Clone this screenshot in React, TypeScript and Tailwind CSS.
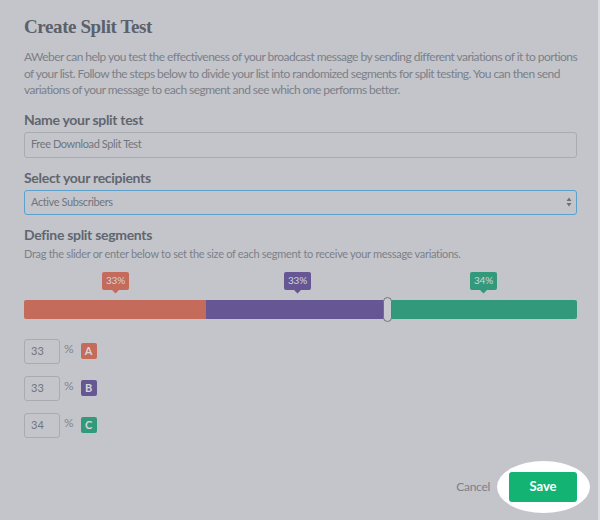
import React from "react";

const sans = { fontFamily: "Lato, 'Open Sans', sans-serif" } as React.CSSProperties;

function Tip({ label, color, left }: { label: string; color: string; left: number }) {
  return (
    <div className="absolute top-0 flex flex-col items-center" style={{ left }}>
      <div className={`rounded-[2px] px-[4px] h-[18px] flex items-center text-[10px] tracking-[-0.2px] text-[#d7d4d4] ${color}`}>{label}</div>
      <div className={`w-[7px] h-[7px] rotate-45 -mt-[5px] ${color}`} />
    </div>
  );
}

function Row({ v, letter, color }: { v: string; letter: string; color: string }) {
  return (
    <div className="flex items-center h-[25px]">
      <div className="w-[36px] h-[25px] border border-[#a9abb0] rounded-[3px] flex items-center pl-[6px] text-[11px] text-[#70757e]">{v}</div>
      <span className="ml-[4px] text-[12px] text-[#80858d] -mt-[4px]">%</span>
      <div className={`ml-[7px] w-[16px] h-[16px] rounded-[2px] flex items-center justify-center text-[11px] font-bold text-[#d8d6d6] ${color}`}>{letter}</div>
    </div>
  );
}

export default function App() {
  return (
    <div className="w-[600px] h-[520px] bg-[#c4c5ca] flex relative overflow-hidden" style={sans}>
      <div className="flex-1 min-w-0 pl-[24px] pr-[21px] pt-[14px] flex flex-col">
        <h1 className="text-[19px] leading-[26px] text-[#5b616b] font-bold tracking-[-0.4px]" style={{ fontFamily: "'Liberation Serif', serif" }}>
          Create Split Test
        </h1>
        <div className="mt-[9px] text-[12px] leading-[16.5px] text-[#7b8089] tracking-[-0.55px] whitespace-nowrap">
          <div>AWeber can help you test the effectiveness of your broadcast message by sending different variations of it to portions</div>
          <div>of your list. Follow the steps below to divide your list into randomized segments for split testing. You can then send</div>
          <div>variations of your message to each segment and see which one performs better.</div>
        </div>
        <div className="mt-[12px] text-[14px] leading-[18px] font-bold text-[#606670] tracking-[-0.3px]">Name your split test</div>
        <div className="mt-[3px] h-[26px] border border-[#a9abb0] rounded-[3px] flex items-center pl-[6px] text-[11px] tracking-[-0.4px] text-[#70757e]">
          Free Download Split Test
        </div>
        <div className="mt-[11px] text-[14px] leading-[18px] font-bold text-[#606670] tracking-[-0.3px]">Select your recipients</div>
        <div className="mt-[3px] h-[25px] border border-[#5aa2cc] rounded-[3px] flex items-center pl-[6px] pr-[4px] text-[11px] tracking-[-0.4px] text-[#70757e]">
          <span className="flex-1">Active Subscribers</span>
          <svg width="6" height="10" viewBox="0 0 6 10"><path d="M3 0.5L5.5 4H0.5Z M3 9.5L0.5 6H5.5Z" fill="#6b707a" /></svg>
        </div>
        <div className="mt-[11px] text-[14px] leading-[18px] font-bold text-[#606670] tracking-[-0.3px]">Define split segments</div>
        <div className="mt-[2px] text-[11px] leading-[16px] text-[#7b8089] tracking-[-0.3px] whitespace-nowrap">
          Drag the slider or enter below to set the size of each segment to receive your message variations.
        </div>
        <div className="relative mt-[10px] h-[52px]">
          <Tip label="33%" color="bg-[#c46b5b]" left={78} />
          <Tip label="33%" color="bg-[#665794]" left={260} />
          <Tip label="34%" color="bg-[#329a7a]" left={446} />
          <div className="absolute left-0 right-0 top-[28px] h-[19px] flex rounded-[2px] overflow-hidden">
            <div className="w-[182px] bg-[#c46b5b]" />
            <div className="w-[181px] bg-[#665794]" />
            <div className="flex-1 bg-[#329a7a]" />
          </div>
          <div className="absolute left-[359px] top-[25px] w-[9px] h-[25px] rounded-full border-[1.5px] border-[#6f737b] bg-[#c8c9ce]" />
        </div>
        <div className="mt-[15px] flex flex-col gap-[12px]">
          <Row v="33" letter="A" color="bg-[#c46b5b]" />
          <Row v="33" letter="B" color="bg-[#665794]" />
          <Row v="34" letter="C" color="bg-[#329a7a]" />
        </div>
        <div className="flex-1" />
        <div className="flex items-center justify-end mb-[18px]">
          <span className="text-[12px] text-[#7b8089] mr-[19px] tracking-[-0.3px]">Cancel</span>
          <div className="relative">
            <div className="absolute -left-[12px] -top-[11px] w-[93px] h-[52px] rounded-[50%] bg-white" />
            <div className="relative w-[68px] h-[30px] rounded-[3px] bg-[#13b473] text-white text-[13px] font-bold flex items-center justify-center">Save</div>
          </div>
        </div>
      </div>
      <div className="w-[2px] bg-[#dcdde0]" />
    </div>
  );
}
